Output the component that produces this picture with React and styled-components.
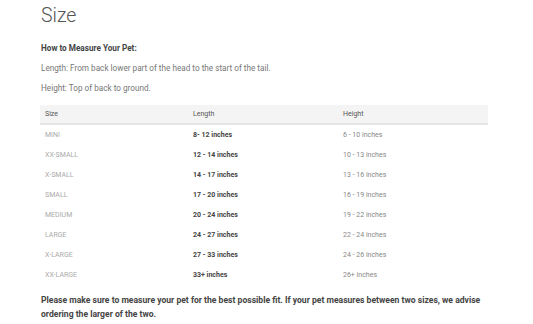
import React from 'react';
import styled, { createGlobalStyle } from 'styled-components';

const GlobalStyle = createGlobalStyle`
  body {
    margin: 0;
    background: #fff;
    font-family: Roboto, "Noto Sans", sans-serif;
    color: #555;
  }
`;

const Page = styled.div`
  width: 533px;
  height: 324px;
  padding: 0 45px 0 38px;
  box-sizing: border-box;
  overflow: hidden;
`;

const Title = styled.h2`
  margin: 0;
  padding: 3px 0 0 3px;
  font-size: 19.5px;
  font-weight: 300;
  line-height: 26px;
  color: #555;
`;

const Intro = styled.div`
  margin-top: 13px;
  padding-left: 3px;
  display: flex;
  flex-direction: column;
  gap: 8px;
`;

const Line = styled.p`
  margin: 0;
  font-size: 8.2px;
  line-height: 12px;
  font-weight: ${({ bold }) => (bold ? 700 : 400)};
  color: ${({ bold }) => (bold ? '#444' : '#777')};
`;

const Table = styled.table`
  margin: 11px 0 0 2px;
  width: 448px;
  table-layout: fixed;
  border-collapse: collapse;
  font-size: 7px;
`;

const Head = styled.thead`
  background: #f4f4f4;
  border-bottom: 2px solid #e6e6e6;
`;

const Th = styled.th`
  text-align: left;
  font-weight: 400;
  color: #555;
  height: 18px;
  padding: 0 0 0 5px;
  width: ${({ w }) => (w ? `${w}px` : 'auto')};
`;

const Td = styled.td`
  height: 20px;
  padding: 0 0 0 5px;
  color: ${({ kind }) => (kind === 'size' ? '#aaa' : kind === 'len' ? '#444' : '#888')};
  font-weight: ${({ kind }) => (kind === 'len' ? 700 : 400)};
`;

const Note = styled.p`
  margin: 8px 0 0 3px;
  font-size: 8.6px;
  line-height: 14px;
  font-weight: 700;
  color: #444;
`;

const rows = [
  ['MINI', '8- 12 inches', '6 - 10 inches'],
  ['XX-SMALL', '12 - 14 inches', '10 - 13 inches'],
  ['X-SMALL', '14 - 17 inches', '13 - 16 inches'],
  ['SMALL', '17 - 20 inches', '16 - 19 inches'],
  ['MEDIUM', '20 - 24 inches', '19 - 22 inches'],
  ['LARGE', '24 - 27 inches', '22 - 24 inches'],
  ['X-LARGE', '27 - 33 inches', '24 - 26 inches'],
  ['XX-LARGE', '33+ inches', '26+ inches'],
];

export default function App() {
  return (
    <>
      <GlobalStyle />
      <Page>
        <Title>Size</Title>
        <Intro>
          <Line bold>How to Measure Your Pet:</Line>
          <Line>Length: From back lower part of the head to the start of the tail.</Line>
          <Line>Height: Top of back to ground.</Line>
        </Intro>
        <Table>
          <Head>
            <tr>
              <Th w={143}>Size</Th>
              <Th w={145}>Length</Th>
              <Th>Height</Th>
            </tr>
          </Head>
          <tbody>
            {rows.map(([size, len, height]) => (
              <tr key={size}>
                <Td kind="size">{size}</Td>
                <Td kind="len">{len}</Td>
                <Td kind="height">{height}</Td>
              </tr>
            ))}
          </tbody>
        </Table>
        <Note>
          Please make sure to measure your pet for the best possible fit. If your pet measures between two sizes, we advise
          ordering the larger of the two.
        </Note>
      </Page>
    </>
  );
}
